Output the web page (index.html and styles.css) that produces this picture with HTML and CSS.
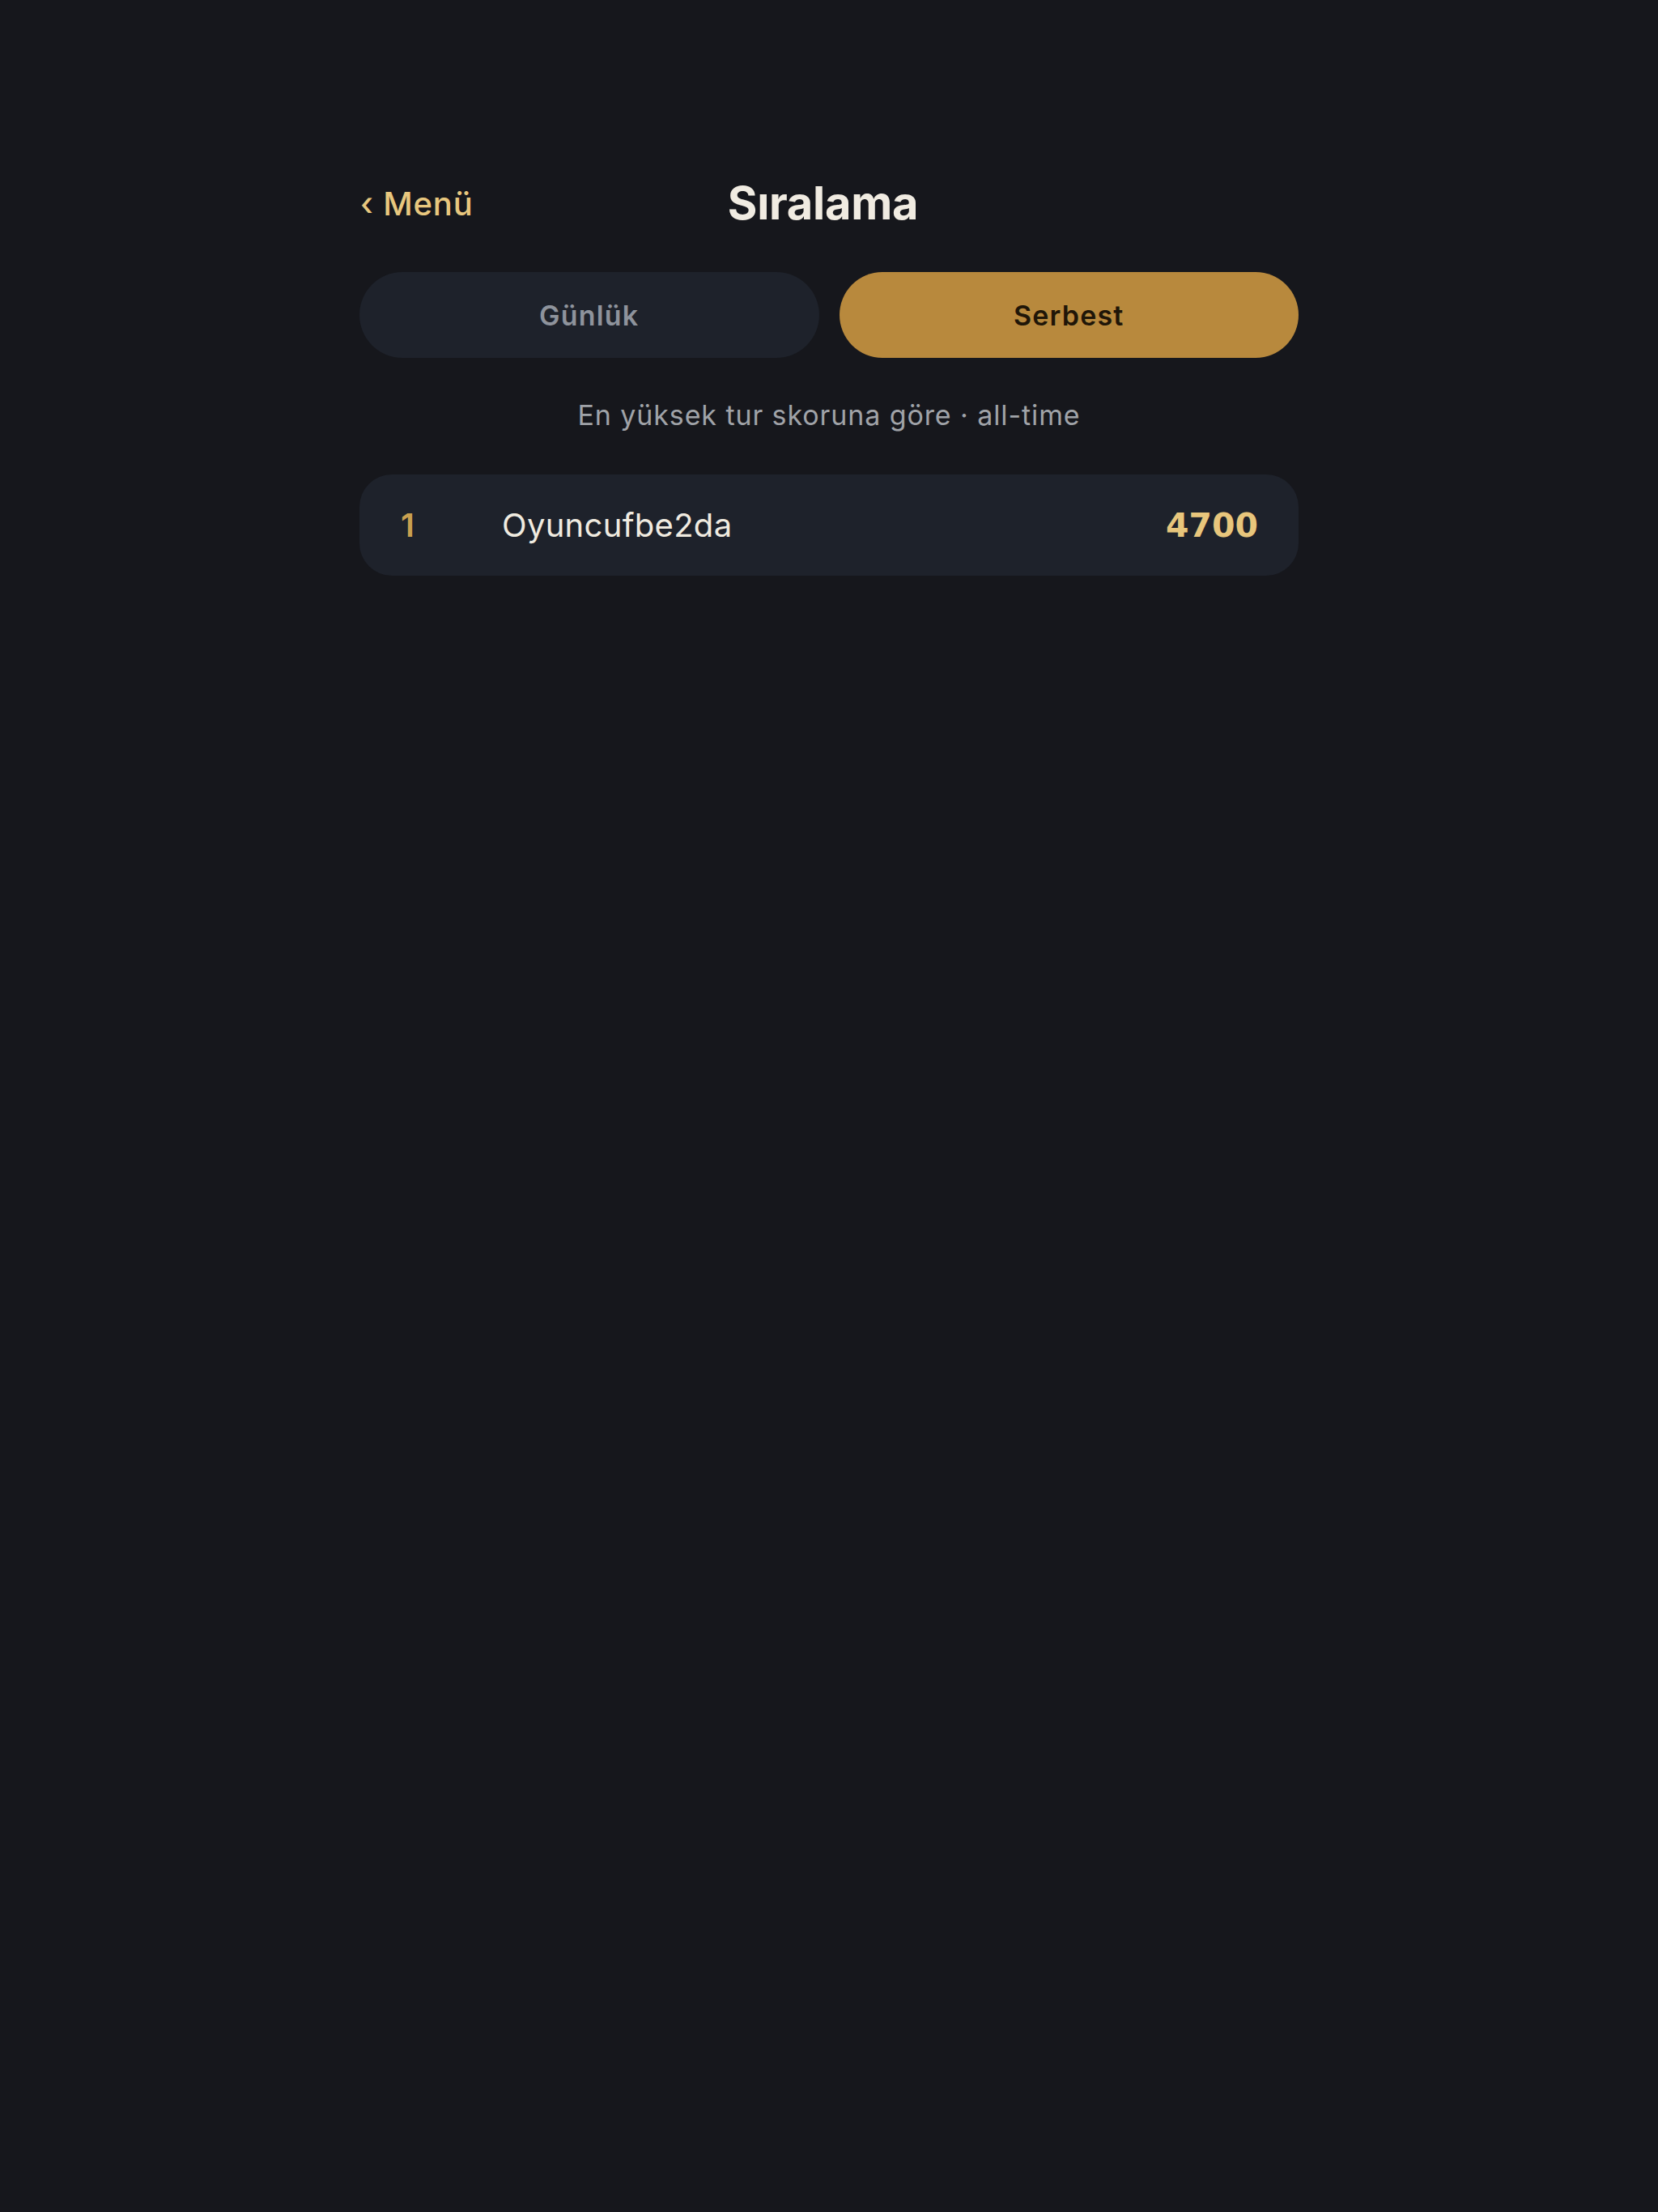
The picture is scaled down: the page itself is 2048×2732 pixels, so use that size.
FILE: index.html
```html
<!DOCTYPE html>
<html lang="tr">
<head>
<meta charset="utf-8">
<title>Sıralama</title>
<link rel="stylesheet" href="styles.css">
</head>
<body>
<main class="page">
  <header class="topbar">
    <a class="back" href="#">‹ Menü</a>
    <h1 class="title">Sıralama</h1>
    <span class="spacer"></span>
  </header>
  <nav class="tabs">
    <button class="tab">Günlük</button>
    <button class="tab tab-active">Serbest</button>
  </nav>
  <p class="subtitle">En yüksek tur skoruna göre · all-time</p>
  <ol class="board">
    <li class="row">
      <span class="rank">1</span>
      <span class="name">Oyuncufbe2da</span>
      <span class="score">4700</span>
    </li>
  </ol>
</main>
</body>
</html>
```
FILE: styles.css
```css
html, body {
  margin: 0;
  padding: 0;
  background: #16171c;
  min-height: 100%;
}
body {
  font-family: Inter, "Noto Sans", "DejaVu Sans", sans-serif;
  color: #f0ebe1;
}
.page {
  width: 1160px;
  margin: 0 auto;
  padding-top: 217px;
}
.topbar {
  display: flex;
  align-items: center;
  height: 68px;
}
.back {
  width: 140px;
  font-size: 40px;
  font-weight: 500;
  color: #e8c77e;
  text-decoration: none;
  white-space: nowrap;
  padding-left: 1px;
  letter-spacing: 0.8px;
}
.title {
  flex: 1;
  margin: 0;
  text-align: center;
  font-size: 56px;
  font-weight: 700;
  color: #f0ebe1;
  letter-spacing: -0.3px;
}
.spacer {
  width: 156px;
}
.tabs {
  display: flex;
  gap: 25px;
  margin-top: 51px;
}
.tab {
  flex: 1;
  height: 106px;
  border: 0;
  border-radius: 53px;
  background: #1e222b;
  color: #8e939c;
  font-family: Inter, "Noto Sans", sans-serif;
  font-size: 34px;
  font-weight: 600;
  letter-spacing: 1.2px;
  padding: 0;
}
.tab-active {
  background: #b8893d;
  color: #1f1608;
}
.subtitle {
  margin: 50px 0 0;
  text-align: center;
  font-size: 34px;
  font-weight: 400;
  letter-spacing: 0.9px;
  color: #a0a3a8;
}
.board {
  list-style: none;
  margin: 53px 0 0;
  padding: 0;
}
.row {
  display: flex;
  align-items: center;
  height: 125px;
  padding: 0 50px 0 51px;
  background: #1e222b;
  border-radius: 40px;
}
.rank {
  width: 125px;
  font-size: 40px;
  font-weight: 600;
  color: #c9a050;
}
.name {
  flex: 1;
  font-size: 40px;
  font-weight: 400;
  letter-spacing: 0.3px;
  color: #f0ebe0;
}
.score {
  font-family: "DejaVu Sans", sans-serif;
  font-size: 41px;
  font-weight: 700;
  color: #e8c67c;
}
```
